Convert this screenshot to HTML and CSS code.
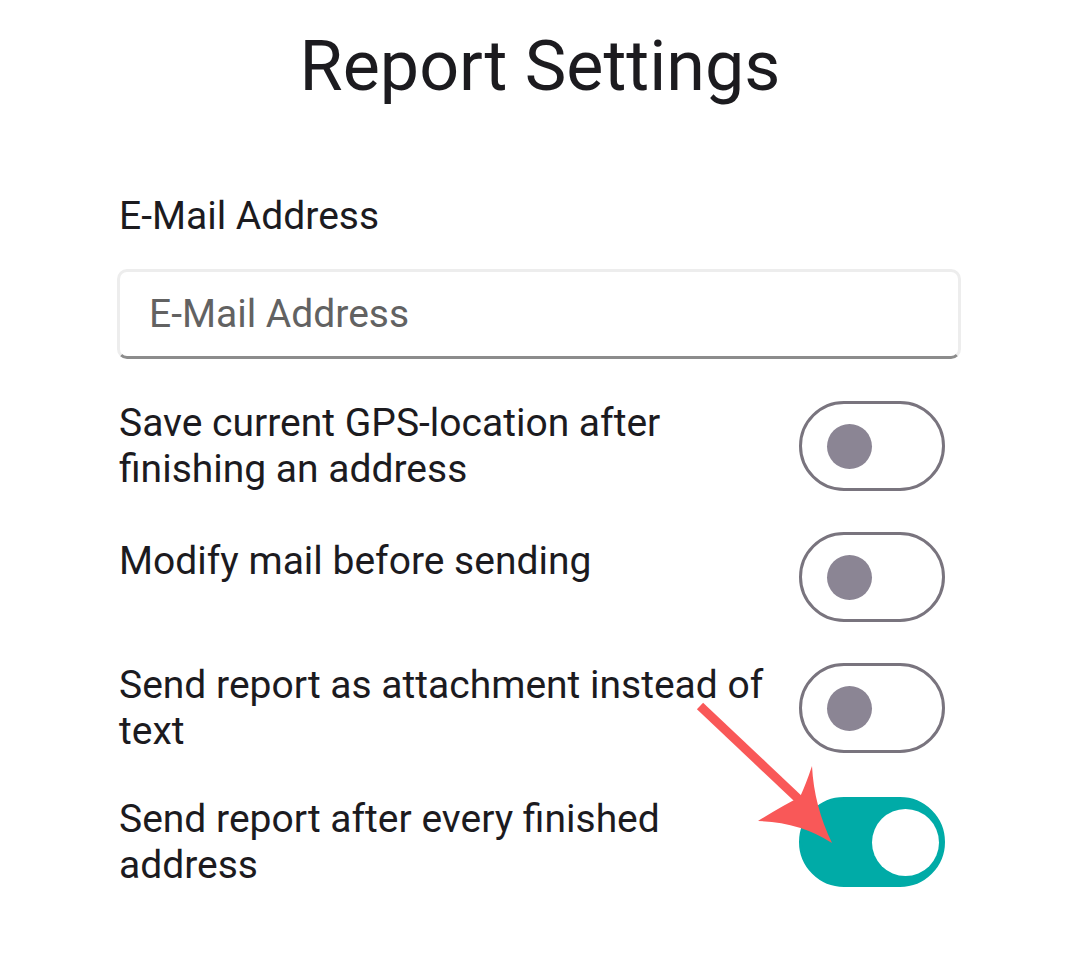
FILE: index.html
```html
<!DOCTYPE html>
<html lang="en">
<head>
<meta charset="utf-8">
<title>Report Settings</title>
<link rel="stylesheet" href="styles.css">
</head>
<body>
<div class="page">
  <h1 class="title">Report Settings</h1>
  <div class="field">
    <label class="field-label" for="email">E-Mail Address</label>
    <input class="field-input" id="email" type="email" placeholder="E-Mail Address">
  </div>
  <div class="rows">
    <div class="row">
      <div class="row-label">Save current GPS-location after finishing an address</div>
      <div class="toggle"><span class="knob"></span></div>
    </div>
    <div class="row">
      <div class="row-label">Modify mail before sending</div>
      <div class="toggle"><span class="knob"></span></div>
    </div>
    <div class="row">
      <div class="row-label">Send report as attachment instead of text</div>
      <div class="toggle"><span class="knob"></span></div>
    </div>
    <div class="row row-last">
      <div class="row-label">Send report after every finished address</div>
      <div class="toggle toggle-on"><span class="knob"></span></div>
    </div>
  </div>
  <svg class="arrow" width="1080" height="963" viewBox="0 0 1080 963" xmlns="http://www.w3.org/2000/svg">
    <line x1="700" y1="706" x2="808" y2="808" stroke="#f95858" stroke-width="9"/>
    <path d="M832 843 Q800 822 758 821 Q782 806 800 797 Q806 784 812 766 Q814 806 832 843 Z" fill="#f95858"/>
  </svg>
</div>
</body>
</html>
```

FILE: styles.css
```css
html, body {
  margin: 0;
  padding: 0;
  background: #ffffff;
}

body {
  font-family: Roboto, "Noto Sans", Arial, sans-serif;
  color: #1c1b1f;
}

.page {
  position: relative;
  width: 1080px;
  height: 963px;
  box-sizing: border-box;
  padding: 25px 119px 0 119px;
  overflow: hidden;
}

.title {
  margin: 0;
  font-size: 70px;
  line-height: 82px;
  font-weight: 400;
  text-align: center;
  color: #1c1b1f;
}

.field {
  display: flex;
  flex-direction: column;
  margin-top: 86px;
}

.field-label {
  font-size: 39px;
  line-height: 46px;
  color: #1c1b1f;
}

.field-input {
  margin: 30px 0 0 -2px;
  height: 90px;
  box-sizing: border-box;
  border: 3px solid #ededed;
  border-bottom: 3px solid #8c8c8c;
  border-radius: 10px;
  padding: 0 0 0 29px;
  font-family: Roboto, "Noto Sans", Arial, sans-serif;
  font-size: 39px;
  color: #1c1b1f;
  background: #ffffff;
  outline: none;
  width: calc(100% + 2px);
}

.field-input::placeholder {
  color: #626262;
  opacity: 1;
}

.rows {
  margin-top: 21px;
  display: flex;
  flex-direction: column;
}

.row {
  display: flex;
  align-items: center;
  padding: 20px 16px 20px 0;
}

.row-last {
  padding-top: 22px;
}

.row-label {
  flex: 1;
  min-height: 78px;
  margin-right: 20px;
  font-size: 39px;
  line-height: 46px;
  color: #1c1b1f;
}

.toggle {
  position: relative;
  flex: none;
  width: 146px;
  height: 90px;
  box-sizing: border-box;
  border: 3px solid #79747e;
  border-radius: 45px;
  background: #ffffff;
}

.toggle .knob {
  position: absolute;
  left: 25px;
  top: 50%;
  width: 45px;
  height: 45px;
  margin-top: -22.5px;
  border-radius: 50%;
  background: #8b8594;
}

.toggle-on {
  background: #00aba7;
  border-color: #00aba7;
}

.toggle-on .knob {
  left: auto;
  right: 3px;
  width: 67px;
  height: 67px;
  margin-top: -33.5px;
  background: #ffffff;
}

.arrow {
  position: absolute;
  left: 0;
  top: 0;
  pointer-events: none;
}
```
